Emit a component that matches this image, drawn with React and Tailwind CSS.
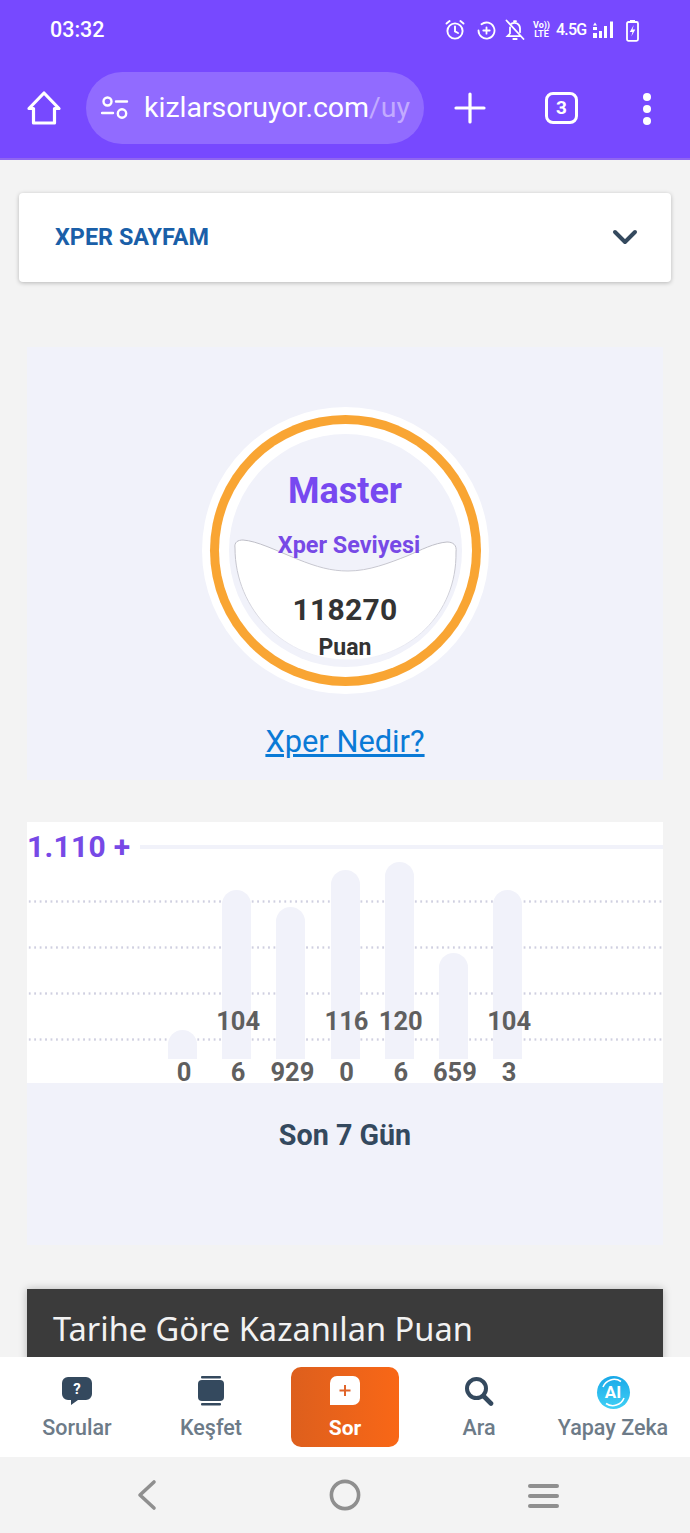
import React from "react";

const R = { fontFamily: "Roboto, sans-serif" };

function StatusIcons() {
  return (
    <div className="flex items-center text-white">
      <svg width="20" height="22" viewBox="0 0 20 22" fill="none" stroke="white" strokeWidth="1.9" strokeLinecap="round" className="mr-[12px]">
        <circle cx="10" cy="12" r="7.6" />
        <path d="M10 7.5V12.4L13 14M1.5 4.6 4.6 2M18.5 4.6 15.4 2" />
      </svg>
      <svg width="19" height="19" viewBox="0 0 19 19" fill="none" stroke="white" strokeWidth="1.8" strokeLinecap="round" className="mr-[9px]">
        <path d="M1.5 9.5a8 8 0 1 0 3-6.2" />
        <path d="M9.5 6.3v6.4M6.3 9.5h6.4" />
      </svg>
      <svg width="20" height="22" viewBox="0 0 20 22" fill="none" stroke="white" strokeWidth="1.8" strokeLinecap="round" className="mr-[7px]">
        <path d="M1.5 1.5 18.5 20M5 8.5v6l-2.5 2.6h12.5M6.6 4.6A5.6 5.6 0 0 1 15 9.3v4" />
        <path d="M8.3 20h3.4M9 2.2h2" />
      </svg>
      <div className="flex flex-col items-center text-[9px] font-bold leading-[9.5px] mr-[5px] w-[19px]" style={R}>
        <span>Vo))</span>
        <span>LTE</span>
      </div>
      <span className="text-[16px] font-medium tracking-[-0.8px] mr-[6px] w-[30px] whitespace-nowrap" style={R}>4.5G</span>
      <svg width="22" height="18" viewBox="0 0 22 18" fill="white" className="mr-[12px]">
        <path d="M1 4.5 3 1.5 5 4.5ZM1 6h4v3H1ZM1 12h4v5H1Z" />
        <rect x="7" y="10" width="3" height="7" />
        <rect x="12" y="5" width="3" height="12" />
        <rect x="18" y="0.5" width="3" height="16.5" />
      </svg>
      <svg width="13" height="23" viewBox="0 0 13 23" fill="none">
        <path d="M4 1h5v2H4Z" fill="white" />
        <rect x="1" y="3" width="11" height="18.8" rx="1.5" stroke="white" strokeWidth="1.8" />
        <path d="M7.8 6 3.8 13h2.7l-1.2 4.5 4-7H6.5Z" fill="white" />
      </svg>
    </div>
  );
}

function Header() {
  return (
    <header className="bg-[#7749ff] h-[160px] shrink-0 border-b-2 border-[#9066f0]">
      <div className="h-[60px] pl-[50px] pr-[51px] flex items-center justify-between">
        <span className="text-white text-[21.5px] font-medium" style={R}>03:32</span>
        <StatusIcons />
      </div>
      <div className="h-[96px] flex items-start pt-[12px] pl-[26px]">
        <svg width="36" height="36" viewBox="0 0 36 36" fill="none" stroke="white" strokeWidth="3.2" strokeLinejoin="round" className="mt-[18px]">
          <path d="M18 3 33 18.5H28.5V33H7.5V18.5H3Z" />
        </svg>
        <div className="ml-[24px] w-[338px] h-[72px] rounded-[36px] bg-[#916bff] flex items-center pl-[15px]">
          <svg width="28" height="24" viewBox="0 0 28 24" fill="none" stroke="white" strokeWidth="2.4" strokeLinecap="round">
            <circle cx="6.5" cy="5.5" r="4" />
            <path d="M15 5.5h11M1 17h11" />
            <circle cx="21" cy="17.5" r="4.2" />
          </svg>
          <span className="ml-[15px] text-[28.5px] text-white whitespace-nowrap" style={R}>
            kizlarsoruyor.com<span className="text-[#c2aaff]">/uy</span>
          </span>
        </div>
        <svg width="32" height="32" viewBox="0 0 32 32" stroke="white" strokeWidth="3.2" strokeLinecap="round" className="ml-[30px] mt-[20px]">
          <path d="M16 2v28M2 16h28" />
        </svg>
        <div className="ml-[59px] mt-[20px] w-[33px] h-[32px] rounded-[8px] border-[3px] border-white flex items-center justify-center text-white text-[19px] font-bold" style={R}>3</div>
        <div className="ml-[65px] mt-[21px] flex flex-col gap-[4px]">
          <span className="w-[8px] h-[8px] rounded-full bg-white" />
          <span className="w-[8px] h-[8px] rounded-full bg-white" />
          <span className="w-[8px] h-[8px] rounded-full bg-white" />
        </div>
      </div>
    </header>
  );
}

function Level() {
  return (
    <section className="mx-[27px] mt-[65px] h-[433px] bg-[#f1f2fa] flex flex-col items-center pt-[60px]">
      <div className="w-[287px] h-[287px] rounded-full bg-white p-[8px] shrink-0">
        <div className="w-full h-full rounded-full bg-[#f9a533] p-[9px]">
          <div className="w-full h-full rounded-full bg-white p-[10px]">
            <div className="relative w-full h-full rounded-full bg-[#f1f2fa] flex flex-col items-center" style={R}>
              <svg width="234" height="234" viewBox="0 0 234 234" className="absolute left-0 top-0">
                <defs>
                  <linearGradient id="waveStroke" x1="0" y1="0" x2="0" y2="1">
                    <stop offset="0" stopColor="#bdbdc6" />
                    <stop offset="0.55" stopColor="#d6d6de" />
                    <stop offset="1" stopColor="#f1f2fa" />
                  </linearGradient>
                </defs>
                <path
                  d="M6 114C5 108 9 106 14 106C28 107 46 116 68 125C88 133 102 137 119 137C140 137 160 129 178 122C192 116 205 109 218 108C224 108 228 111 227 118C228 180 180 226 118 226C56 226 6 176 6 114Z"
                  fill="white"
                  stroke="url(#waveStroke)"
                  strokeWidth="1"
                />
              </svg>
              <span className="relative mt-[35px] text-[36px] leading-[44px] font-bold text-[#7749f0]">Master</span>
              <span className="relative mt-[18px] ml-[8px] text-[23.4px] leading-[28px] font-bold text-[#7749e6]">Xper Seviyesi</span>
              <span className="relative mt-[33px] text-[30px] leading-[36px] font-bold text-[#333333] tracking-[0.3px]">118270</span>
              <span className="relative mt-[6px] text-[23px] leading-[28px] font-bold text-[#333333]">Puan</span>
            </div>
          </div>
        </div>
      </div>
      <a className="mt-[29px] text-[30.8px] leading-[38px] text-[#0a7ad6] underline" style={R}>Xper Nedir?</a>
    </section>
  );
}

const bars = [
  { h: 29, v: "0" },
  { h: 169, v: "1046" },
  { h: 152, v: "929" },
  { h: 189, v: "1160" },
  { h: 197, v: "1206" },
  { h: 106, v: "659" },
  { h: 169, v: "1043" },
];

const Dotted = ({ cls }) => (
  <div className={`absolute left-0 right-0 h-[3px] bg-[radial-gradient(circle,#cfcfe0_1px,transparent_1.3px)] bg-[length:5.45px_3px] ${cls}`} />
);

function Chart() {
  return (
    <section className="mx-[27px] mt-[42px] h-[423px] bg-[#f1f2fa]" style={R}>
      <div className="relative h-[261px] bg-white">
        <Dotted cls="top-[78px]" />
        <Dotted cls="top-[124px]" />
        <Dotted cls="top-[170px]" />
        <Dotted cls="top-[216px]" />
        <div className="relative h-[49px] mb-[1px] flex items-center">
          <span className="text-[30px] font-bold text-[#7749e6] tracking-[0.3px]">1.110 +</span>
          <div className="ml-[10px] flex-1 h-[4px] mt-[1px] bg-[#f1f2fa]" />
        </div>
        <div className="relative -mt-[10px] h-[197px] pl-[128.4px] flex items-end">
          {bars.map((b, i) => (
            <div key={i} className="relative w-[54.2px] flex justify-center">
              <div className="w-[29px] rounded-t-[15px] bg-[#f1f2fa]" style={{ height: b.h }} />
              <span className="absolute left-[1.5px] w-[54.2px] bottom-[-39px] text-center break-all text-[25.5px] leading-[51px] font-bold text-[#5f5f5f]">
                {b.v}
              </span>
            </div>
          ))}
        </div>
      </div>
      <h3 className="mt-[31px] text-center text-[28.7px] leading-[42px] font-bold text-[#34495e]">Son 7 Gün</h3>
    </section>
  );
}

function Nav() {
  const label = "text-[21.5px] leading-[26px] font-medium text-[#6d7b88]";
  return (
    <nav className="h-[100px] bg-white shrink-0 px-[10px] grid grid-cols-5 items-center relative" style={R}>
      <div className="flex flex-col items-center gap-[9px]">
        <svg width="32" height="30" viewBox="0 0 32 30" className="mt-[3px]">
          <path d="M7 1h18a6 6 0 0 1 6 6v11a6 6 0 0 1-6 6H17l-7 5v-5H7a6 6 0 0 1-6-6V7a6 6 0 0 1 6-6Z" fill="#34495e" />
          <text x="16" y="18" textAnchor="middle" fontSize="15" fontWeight="700" fill="white" fontFamily="Roboto, sans-serif">?</text>
        </svg>
        <span className={label}>Sorular</span>
      </div>
      <div className="flex flex-col items-center gap-[9px]">
        <svg width="28" height="30" viewBox="0 0 28 30" className="mt-[3px]" fill="#34495e">
          <rect x="4" y="0" width="20" height="2.4" rx="1" />
          <rect x="1" y="4" width="26" height="21" rx="4" />
          <rect x="4" y="27" width="20" height="2.4" rx="1" />
        </svg>
        <span className={label}>Keşfet</span>
      </div>
      <div className="flex justify-center">
        <div className="w-[108px] h-[80px] rounded-[10px] bg-gradient-to-r from-[#dd5f1d] to-[#f96716] flex flex-col items-center pt-[9px]">
          <svg width="30" height="29" viewBox="0 0 30 29">
            <path d="M7 0H23a7 7 0 0 1 7 7V22a7 7 0 0 1-7 7H0V7a7 7 0 0 1 7-7Z" fill="white" />
            <path d="M15 9v11M9.5 14.5h11" stroke="#e0642a" strokeWidth="2" fill="none" />
          </svg>
          <span className="mt-[10px] text-[21px] leading-[26px] font-bold text-white">Sor</span>
        </div>
      </div>
      <div className="flex flex-col items-center gap-[9px]">
        <svg width="30" height="30" viewBox="0 0 30 30" className="mt-[3px]" fill="none" stroke="#34495e" strokeLinecap="round">
          <circle cx="12.5" cy="12.5" r="9.5" strokeWidth="4" />
          <path d="M20 20.5 27 27.5" strokeWidth="4.6" />
        </svg>
        <span className={label}>Ara</span>
      </div>
      <div className="flex flex-col items-center gap-[6px]">
        <div className="relative mt-[3px] w-[33px] h-[33px] rounded-full bg-gradient-to-b from-[#18a8e8] to-[#3fd0f5] flex items-center justify-center">
          <svg width="33" height="33" viewBox="0 0 33 33" fill="none" stroke="white" strokeWidth="1.6" className="absolute left-0 top-0">
            <path d="M6 11A12 12 0 0 1 24 5.5M27 22a12 12 0 0 1-18 5.5" />
          </svg>
          <span className="relative text-[17px] leading-none font-bold text-white">AI</span>
        </div>
        <span className={`${label} whitespace-nowrap`}>Yapay Zeka</span>
      </div>
    </nav>
  );
}

function SystemNav() {
  return (
    <div className="h-[76px] bg-[#f3f3f3] shrink-0 flex items-start justify-between pl-[136px] pr-[131px] pt-[22px]">
      <svg width="26" height="32" viewBox="0 0 26 32" fill="none" stroke="#8f8f8f" strokeWidth="3.6" strokeLinecap="round" strokeLinejoin="round">
        <path d="M18 3 4 16l14 13" />
      </svg>
      <svg width="32" height="32" viewBox="0 0 32 32" fill="none" stroke="#8f8f8f" strokeWidth="3.6">
        <circle cx="16" cy="16" r="13.6" />
      </svg>
      <div className="flex flex-col gap-[6px] mt-[5px] w-[31px]">
        <span className="h-[4px] rounded-full bg-[#8f8f8f]" />
        <span className="h-[4px] rounded-full bg-[#8f8f8f]" />
        <span className="h-[4px] rounded-full bg-[#8f8f8f]" />
      </div>
    </div>
  );
}

export default function App() {
  return (
    <div className="w-[690px] h-[1533px] flex flex-col bg-[#f3f3f3] overflow-hidden">
      <Header />
      <main className="flex-1 min-h-0 overflow-hidden pt-[33px]">
        <div className="mx-[19px] h-[89px] bg-white rounded-[4px] shadow-[0_1px_4px_rgba(0,0,0,0.25)] flex items-center justify-between pl-[36px] pr-[33px]">
          <span className="text-[23.4px] font-bold text-[#1a5fa8]" style={R}>XPER SAYFAM</span>
          <svg width="26" height="18" viewBox="0 0 26 18" fill="none" stroke="#34495e" strokeWidth="4" strokeLinecap="round" strokeLinejoin="round">
            <path d="M3 3l10 10L23 3" />
          </svg>
        </div>
        <Level />
        <Chart />
        <div className="mx-[27px] mt-[44px] h-[120px] bg-[#3b3b3b] shadow-[0_0_8px_rgba(0,0,0,0.25)] pl-[26px] pt-[16px]">
          <h2 className="text-[32.6px] leading-[48px] text-[#f2f2f2]" style={{ fontFamily: '"Noto Sans", sans-serif' }}>Tarihe Göre Kazanılan Puan</h2>
        </div>
      </main>
      <Nav />
      <SystemNav />
    </div>
  );
}
